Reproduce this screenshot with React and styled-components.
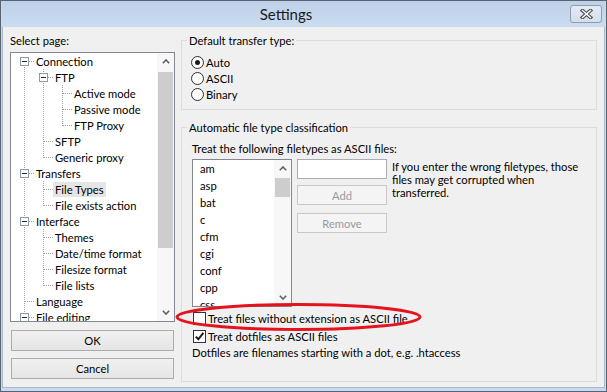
import React from 'react'
import styled, { createGlobalStyle } from 'styled-components'

const GlobalStyle = createGlobalStyle`
  html, body {
    margin: 0;
    padding: 0;
    background: #fff;
  }
  body {
    font-family: 'Segoe UI', Lato, 'Liberation Sans', sans-serif;
    font-size: 11.2px;
    color: #000;
  }
  * {
    box-sizing: border-box;
  }
`

const Window = styled.div`
  position: relative;
  width: 607px;
  height: 392px;
  border: 1px solid #59636e;
  background: #c8daef;
  padding: 0 1px 3px;
  display: flex;
  flex-direction: column;
`

const TitleBar = styled.div`
  height: 26px;
  display: flex;
  align-items: flex-start;
  padding-right: 3px;
  background: linear-gradient(#bed1e8, #cbdcf0);
`

const Title = styled.div`
  flex: 1;
  text-align: center;
  font-size: 15px;
  line-height: 26px;
  color: #1a1a1a;
`

const CloseButton = styled.div`
  margin-top: 4px;
  width: 32px;
  height: 18px;
  border: 1px solid #8e9cae;
  border-radius: 3px;
  background: linear-gradient(#e3ebf4, #d3dfed);
  display: flex;
  align-items: center;
  justify-content: center;
`

const Client = styled.div`
  flex: 1;
  display: flex;
  gap: 6px;
  padding: 6px 7px 5px;
  background: #f0f0f0;
  border: 1px solid #a9b8ca;
  border-top: none;
`

const LeftColumn = styled.div`
  width: 165px;
  display: flex;
  flex-direction: column;
`

const Caption = styled.div`
  line-height: 15px;
  margin-bottom: ${({ $gap }) => $gap || 0}px;
`

const TreeBox = styled.div`
  height: 270px;
  display: flex;
  border: 1px solid #828790;
  background: #fff;
  overflow: hidden;
`

const TreeList = styled.div`
  flex: 1;
  padding-left: 4px;
  overflow: hidden;
`

const TreeRow = styled.div`
  height: 16px;
  display: flex;
  align-items: center;
  white-space: nowrap;
`

const TreeLabel = styled.span`
  line-height: 15px;
  padding: 0 2px;
  background: ${({ $selected }) => ($selected ? '#e5e5e5' : 'transparent')};
`

const ScrollTrack = styled.div`
  width: 17px;
  display: flex;
  flex-direction: column;
  background: #f7f7f7;
`

const ArrowCell = styled.div`
  height: 17px;
  flex: none;
  display: flex;
  align-items: center;
  justify-content: center;
`

const ThumbArea = styled.div`
  flex: 1;
  padding: 0 1px;
`

const Thumb = styled.div`
  margin-top: ${({ $top }) => $top}px;
  height: ${({ $size }) => $size}px;
  background: #cdcdcd;
`

const PushButton = styled.div`
  height: ${({ $height }) => $height || 21}px;
  margin-top: ${({ $gap }) => $gap || 0}px;
  margin-left: ${({ $inset }) => $inset || 0}px;
  margin-right: ${({ $inset }) => $inset || 0}px;
  display: flex;
  align-items: center;
  justify-content: center;
  border: 1px solid ${({ $disabled }) => ($disabled ? '#c8c8c8' : '#acacac')};
  background: ${({ $disabled }) =>
    $disabled ? '#f4f4f4' : 'linear-gradient(#f0f0f0, #e5e5e5)'};
  color: ${({ $disabled }) => ($disabled ? '#9a9a9a' : '#000')};
`

const RightColumn = styled.div`
  flex: 1;
  display: flex;
  flex-direction: column;
  gap: 10px;
`

const GroupBox = styled.fieldset`
  margin: 0;
  min-width: 0;
  border: 1px solid #dcdcdc;
  padding: 6px 10px 7px;
  flex: ${({ $grow }) => ($grow ? 1 : 'none')};
  display: flex;
  flex-direction: column;
`

const Legend = styled.legend`
  margin-left: -5px;
  padding: 0 2px;
  line-height: 15px;
`

const OptionRow = styled.label`
  height: ${({ $height }) => $height || 16}px;
  margin-top: ${({ $gap }) => $gap || 0}px;
  display: flex;
  align-items: center;
  gap: 2px;
`

const RadioCircle = styled.span`
  width: 13px;
  height: 13px;
  margin-left: -1px;
  border-radius: 50%;
  border: 1px solid #333;
  background: radial-gradient(circle, #fff 55%, #ececec);
  display: flex;
  align-items: center;
  justify-content: center;

  &::after {
    content: '';
    width: 5px;
    height: 5px;
    border-radius: 50%;
    background: ${({ $checked }) => ($checked ? '#1b1b1b' : 'transparent')};
  }
`

const CheckSquare = styled.span`
  width: 13px;
  height: 13px;
  margin-left: 1px;
  border: 1px solid #333;
  background: #fff;
  display: flex;
  align-items: center;
  justify-content: center;
`

const EditRow = styled.div`
  display: flex;
  gap: 5px;
`

const ListBox = styled.div`
  width: 100px;
  height: 148px;
  flex: none;
  display: flex;
  border: 1px solid #828790;
  background: #fff;
  overflow: hidden;
`

const ListItems = styled.div`
  flex: 1;
  overflow: hidden;
`

const ListItem = styled.div`
  height: 17px;
  line-height: 17px;
  padding-left: 7px;
`

const EditColumn = styled.div`
  width: 90px;
  flex: none;
  display: flex;
  flex-direction: column;
`

const TextInput = styled.div`
  height: 20px;
  border: 1px solid #abadb3;
  background: #fff;
`

const HelpText = styled.div`
  flex: 1;
  margin-top: 1px;
  line-height: 13px;
  white-space: nowrap;
`

const NoteText = styled.div`
  line-height: 16px;
`

const Annotation = styled.svg`
  position: absolute;
  left: 174px;
  top: 301px;
  pointer-events: none;
`

const Connector = ({ line, across, expander }) => (
  <svg width="19" height="16" style={{ display: 'block', flex: 'none' }} shapeRendering="crispEdges">
    {line !== 'none' && (
      <line
        x1="9.5"
        x2="9.5"
        y1={line === 'bottom' ? 8 : 0}
        y2={line === 'top' ? 9 : 16}
        stroke="#a0a0a0"
        strokeDasharray="1 1"
      />
    )}
    {across && (
      <line x1="10" x2="19" y1="8.5" y2="8.5" stroke="#a0a0a0" strokeDasharray="1 1" />
    )}
    {expander && (
      <g>
        <rect x="5.5" y="4.5" width="8" height="8" fill="#fff" stroke="#8c9aab" />
        <line x1="7" x2="12" y1="8.5" y2="8.5" stroke="#2b2b2b" />
      </g>
    )}
  </svg>
)

const Chevron = ({ down }) => (
  <svg width="8" height="5" style={{ display: 'block' }}>
    <polyline
      points={down ? '0.8,0.8 4,4 7.2,0.8' : '0.8,4.2 4,1 7.2,4.2'}
      fill="none"
      stroke="#606060"
      strokeWidth="1.6"
    />
  </svg>
)

const Scrollbar = ({ thumbTop, thumbSize }) => (
  <ScrollTrack>
    <ArrowCell>
      <Chevron />
    </ArrowCell>
    <ThumbArea>
      <Thumb $top={thumbTop} $size={thumbSize} />
    </ThumbArea>
    <ArrowCell>
      <Chevron down />
    </ArrowCell>
  </ScrollTrack>
)

const pages = [
  { label: 'Connection', guides: [], line: 'bottom', expander: true },
  { label: 'FTP', guides: [true], line: 'full', expander: true },
  { label: 'Active mode', guides: [true, true], line: 'full' },
  { label: 'Passive mode', guides: [true, true], line: 'full' },
  { label: 'FTP Proxy', guides: [true, true], line: 'top' },
  { label: 'SFTP', guides: [true], line: 'full' },
  { label: 'Generic proxy', guides: [true], line: 'top' },
  { label: 'Transfers', guides: [], line: 'full', expander: true },
  { label: 'File Types', guides: [true], line: 'full', selected: true },
  { label: 'File exists action', guides: [true], line: 'top' },
  { label: 'Interface', guides: [], line: 'full', expander: true },
  { label: 'Themes', guides: [true], line: 'full' },
  { label: 'Date/time format', guides: [true], line: 'full' },
  { label: 'Filesize format', guides: [true], line: 'full' },
  { label: 'File lists', guides: [true], line: 'top' },
  { label: 'Language', guides: [], line: 'full' },
  { label: 'File editing', guides: [], line: 'full', expander: true },
]

const fileTypes = ['am', 'asp', 'bat', 'c', 'cfm', 'cgi', 'conf', 'cpp', 'css']

const transferTypes = [
  { label: 'Auto', checked: true },
  { label: 'ASCII' },
  { label: 'Binary' },
]

const PageTree = () => (
  <TreeBox>
    <TreeList>
      {pages.map((page) => (
        <TreeRow key={page.label}>
          {page.guides.map((on, i) => (
            <Connector key={i} line={on ? 'full' : 'none'} />
          ))}
          <Connector line={page.line} across expander={page.expander} />
          <TreeLabel $selected={page.selected}>{page.label}</TreeLabel>
        </TreeRow>
      ))}
    </TreeList>
    <Scrollbar thumbTop={2} thumbSize={176} />
  </TreeBox>
)

const App = () => (
  <>
    <GlobalStyle />
    <Window>
      <TitleBar>
        <Title>Settings</Title>
        <CloseButton>
          <svg width="13" height="10">
            <path d="M2.5 1.5 L10.5 8.5 M10.5 1.5 L2.5 8.5" stroke="#4a4a4a" strokeWidth="3.6" strokeLinecap="square" />
            <path d="M2.5 1.5 L10.5 8.5 M10.5 1.5 L2.5 8.5" stroke="#fff" strokeWidth="1.5" strokeLinecap="square" />
          </svg>
        </CloseButton>
      </TitleBar>

      <Client>
        <LeftColumn>
          <Caption $gap={4}>Select page:</Caption>
          <PageTree />
          <PushButton $gap={8} $inset={1}>OK</PushButton>
          <PushButton $gap={7} $inset={1}>Cancel</PushButton>
        </LeftColumn>

        <RightColumn>
          <GroupBox>
            <Legend>Default transfer type:</Legend>
            {transferTypes.map((t) => (
              <OptionRow key={t.label}>
                <RadioCircle $checked={t.checked} />
                <span>{t.label}</span>
              </OptionRow>
            ))}
          </GroupBox>

          <GroupBox $grow>
            <Legend>Automatic file type classification</Legend>
            <Caption $gap={3}>Treat the following filetypes as ASCII files:</Caption>
            <EditRow>
              <ListBox>
                <ListItems>
                  {fileTypes.map((ext) => (
                    <ListItem key={ext}>{ext}</ListItem>
                  ))}
                </ListItems>
                <Scrollbar thumbTop={1} thumbSize={19} />
              </ListBox>
              <EditColumn>
                <TextInput />
                <PushButton $height={20} $gap={6} $disabled>Add</PushButton>
                <PushButton $height={20} $gap={8} $disabled>Remove</PushButton>
              </EditColumn>
              <HelpText>
                If you enter the wrong filetypes, those
                <br />
                files may get corrupted when
                <br />
                transferred.
              </HelpText>
            </EditRow>
            <OptionRow $height={18} $gap={2}>
              <CheckSquare />
              <span>Treat files without extension as ASCII file</span>
            </OptionRow>
            <OptionRow $height={18}>
              <CheckSquare>
                <svg width="11" height="11">
                  <path d="M1.8 5.6 L4.3 8.3 L9.4 1.8" fill="none" stroke="#1b1b1b" strokeWidth="2" />
                </svg>
              </CheckSquare>
              <span>Treat dotfiles as ASCII files</span>
            </OptionRow>
            <NoteText>Dotfiles are filenames starting with a dot, e.g. .htaccess</NoteText>
          </GroupBox>
        </RightColumn>
      </Client>

      <Annotation width="250" height="32">
        <ellipse cx="123.5" cy="15" rx="121.5" ry="12.5" fill="none" stroke="#e3141d" strokeWidth="3" />
      </Annotation>
    </Window>
  </>
)

export default App
